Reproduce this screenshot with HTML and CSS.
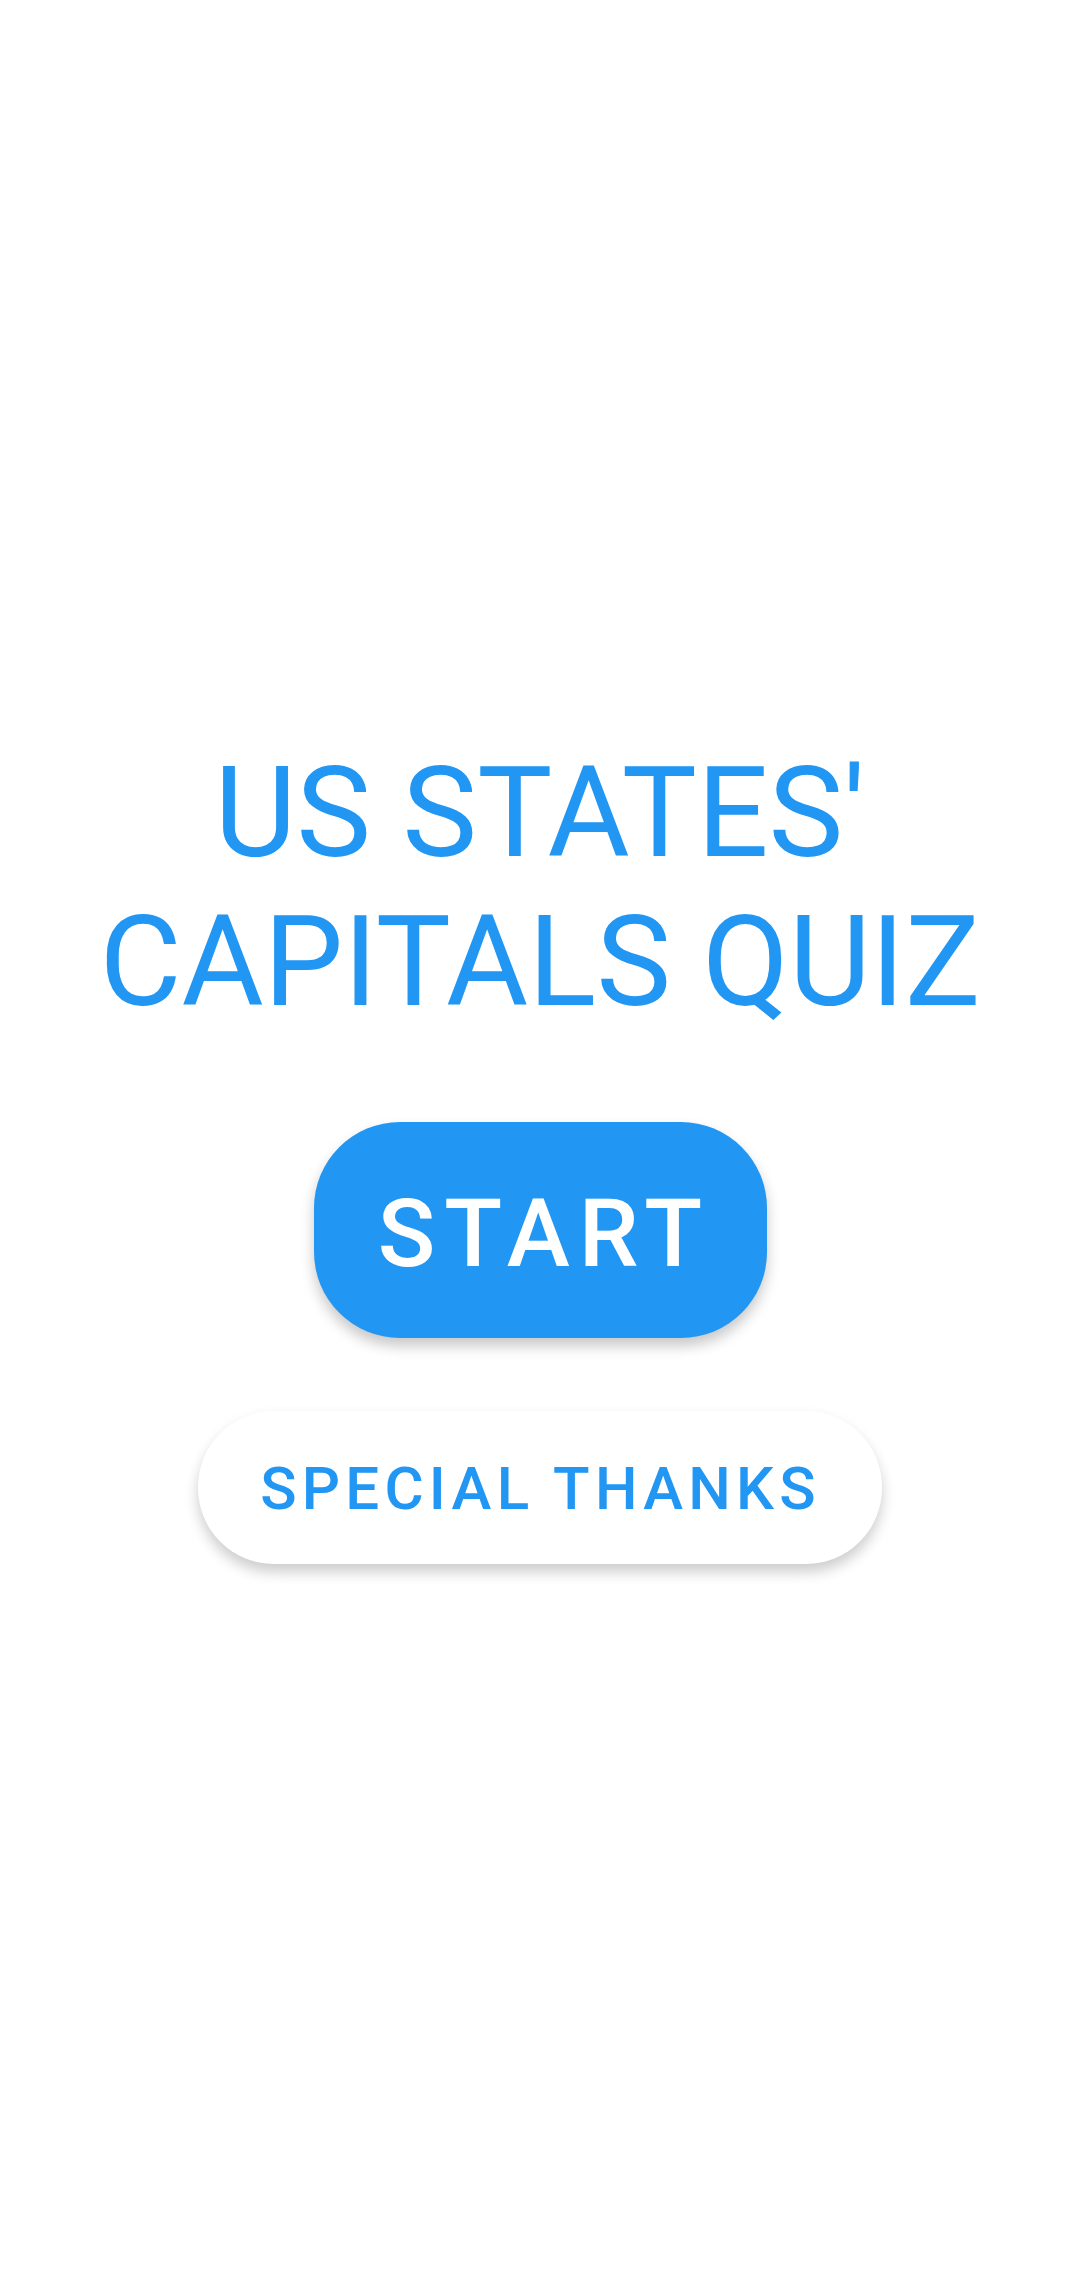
FILE: index.html
```html
<!DOCTYPE html>
<html lang="en">
<head>
    <meta charset="UTF-8">
    <meta name="viewport" content="width=device-width, initial-scale=1.0">
    <title>US States' Capitals Quiz</title>
    <link rel="stylesheet" href="styles.css">
</head>
<body>
<div class="screen">
    <h1 class="title">US STATES'<br>CAPITALS QUIZ</h1>
    <button class="start-button">START</button>
    <button class="thanks-button">SPECIAL THANKS</button>
</div>
</body>
</html>
```

FILE: styles.css
```css
* {
    box-sizing: border-box;
}

body {
    margin: 0;
    background-color: #fff;
    font-family: Roboto, "Liberation Sans", sans-serif;
}

.screen {
    display: flex;
    flex-direction: column;
    align-items: center;
    min-height: 2273px;
    padding-top: 739px;
}

.title {
    margin: 0;
    font-size: 126px;
    font-weight: 400;
    line-height: 149px;
    color: #2196f3;
    text-align: center;
}

button {
    border: none;
    cursor: pointer;
    font-family: inherit;
    font-weight: 500;
}

.start-button {
    width: 453px;
    height: 216px;
    margin-top: 85px;
    padding-top: 7px;
    font-size: 95px;
    letter-spacing: 9px;
    text-indent: 9px;
    color: #fff;
    background-color: #2196f3;
    border-radius: 86px;
    box-shadow: 0 8px 14px rgba(0, 0, 0, 0.22);
}

.thanks-button {
    width: 684px;
    height: 153px;
    margin-top: 73px;
    padding-top: 3px;
    font-size: 60px;
    letter-spacing: 5.25px;
    text-indent: 1px;
    color: #2196f3;
    background-color: #fff;
    border-radius: 76px;
    box-shadow: 0 8px 14px rgba(0, 0, 0, 0.2);
}
```
